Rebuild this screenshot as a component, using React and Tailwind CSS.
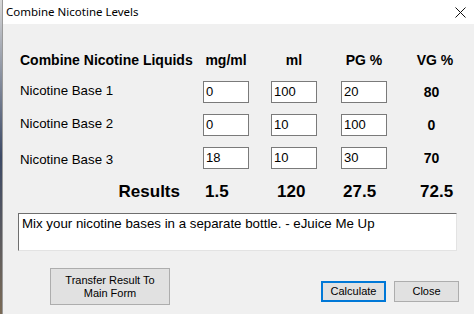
import React from "react";

const rows = [
  { label: "Nicotine Base 1", mg: "0", ml: "100", pg: "20", vg: "80", shift: "-mt-[3px]" },
  { label: "Nicotine Base 2", mg: "0", ml: "10", pg: "100", vg: "0", shift: "-mt-[3px]" },
  { label: "Nicotine Base 3", mg: "18", ml: "10", pg: "30", vg: "70", shift: "mt-[4px]" },
];

function Field({ value }) {
  return (
    <div className="w-[46px] h-[22px] bg-white border border-[#7a7a7a] pl-[2px] flex items-center text-[13px] text-black">
      {value}
    </div>
  );
}

export default function App() {
  const font = { fontFamily: '"Liberation Sans", Arial, sans-serif' };

  return (
    <div className="w-[474px] h-[314px] flex bg-[#f0f0f0] overflow-hidden" style={font}>
      {/* desktop peeking at the left edge */}
      <div className="w-[2px] h-full bg-gradient-to-b from-[#d8d8d8] via-[#3d4a66] to-[#7a6a55]" />
      <div className="flex-1 flex flex-col border-l border-[#9a9a9a]">
        {/* title bar */}
        <div className="h-[24px] bg-white flex items-center justify-between pl-[3px] pr-[8px]">
          <span className="text-[11.5px] text-black" style={{ fontFamily: '"Noto Sans", "Open Sans", sans-serif' }}>
            Combine Nicotine Levels
          </span>
          <svg width="11" height="11" viewBox="0 0 11 11">
            <path d="M0.5 0.5 L10.5 10.5 M10.5 0.5 L0.5 10.5" stroke="#111" strokeWidth="1" />
          </svg>
        </div>

        {/* header */}
        <div className="flex mt-[28px] h-[16px] items-center text-[14px] font-bold text-black">
          <div className="w-[200px] pl-[17px]">Combine Nicotine Liquids</div>
          <div className="w-[68px]"><div className="w-[46px] text-center">mg/ml</div></div>
          <div className="w-[70px]"><div className="w-[46px] text-center">ml</div></div>
          <div className="w-[67px]"><div className="w-[46px] text-center">PG %</div></div>
          <div className="w-[50px] text-center pl-[4px]">VG %</div>
        </div>

        {/* bases */}
        <div className="flex flex-col gap-[11px] mt-[13px]">
          {rows.map((r) => (
            <div key={r.label} className="flex h-[22px] items-center">
              <div className={`w-[200px] pl-[17px] text-[13.3px] text-black ${r.shift}`}>{r.label}</div>
              <div className="w-[68px]"><Field value={r.mg} /></div>
              <div className="w-[70px]"><Field value={r.ml} /></div>
              <div className="w-[67px]"><Field value={r.pg} /></div>
              <div className="w-[46px] text-center text-[14px] font-bold text-black pl-[1px]">{r.vg}</div>
            </div>
          ))}
        </div>

        {/* results */}
        <div className="flex mt-[13px] h-[20px] items-center text-[17px] font-bold text-black">
          <div className="w-[200px] text-right pr-[23px]">Results</div>
          <div className="w-[68px] pl-[2px]">1.5</div>
          <div className="w-[70px] pl-[6px]">120</div>
          <div className="w-[67px] pl-[2px]">27.5</div>
          <div className="pl-[12px]">72.5</div>
        </div>

        {/* message */}
        <div className="ml-[15px] mt-[11px] w-[439px] h-[38px] bg-white border-t border-l border-[#6e6e6e] border-r border-b border-r-[#e3e3e3] border-b-[#e3e3e3] pl-[3px] pt-[2px] text-[13.3px] text-black leading-[16px]">
          Mix your nicotine bases in a separate bottle. - eJuice Me Up
        </div>

        {/* buttons */}
        <div className="flex items-start mt-[17px]">
          <button className="ml-[47px] w-[120px] h-[37px] bg-[#e1e1e1] border border-[#adadad] text-[11px] leading-[13px] text-black">
            Transfer Result To
            <br />
            Main Form
          </button>
          <button className="ml-[151px] mt-[13px] w-[65px] h-[21px] bg-[#e1e1e1] border-2 border-[#0078d7] text-[11px] text-black">
            Calculate
          </button>
          <button className="ml-[8px] mt-[13px] w-[65px] h-[21px] bg-[#e1e1e1] border border-[#adadad] text-[11px] text-black">
            Close
          </button>
        </div>
      </div>
    </div>
  );
}
